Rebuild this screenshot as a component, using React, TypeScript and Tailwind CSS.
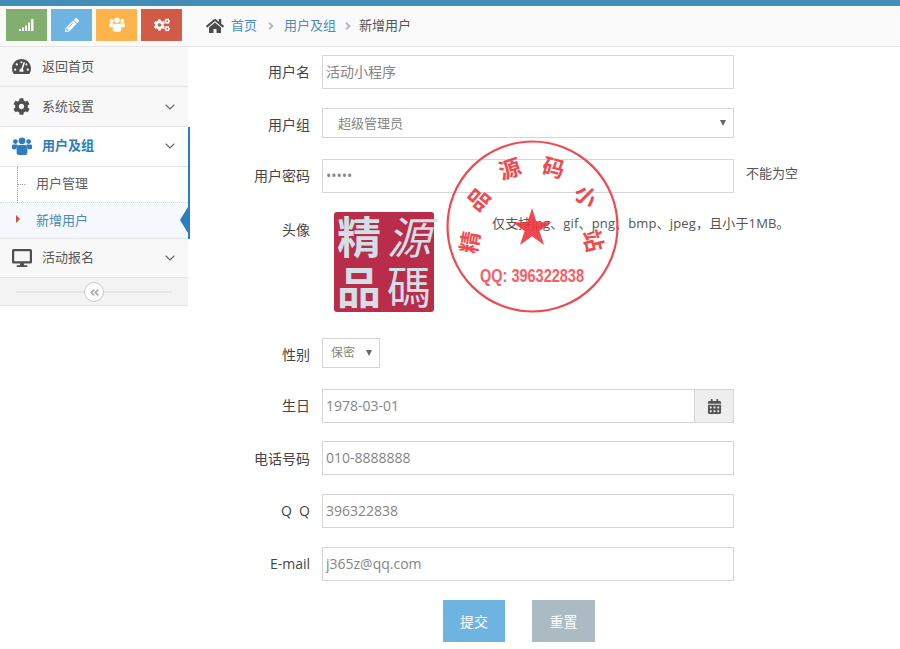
import type { ReactNode } from 'react';
import {
  FaPencilAlt,
  FaCogs,
  FaHome,
  FaTachometerAlt,
  FaCog,
  FaDesktop,
  FaCalendarAlt,
  FaAngleDoubleLeft,
  FaAngleRight,
} from 'react-icons/fa';
import { ChevronDown } from 'lucide-react';

const fontStack = "font-['Open_Sans','Noto_Sans_CJK_SC',sans-serif]";

// three person glyph, closer to the old font-awesome one than the FA5 icon
const UsersIcon = ({ className = '' }: { className?: string }) => (
  <svg className={className} viewBox="0 0 20 18" fill="currentColor">
    <circle cx="3.4" cy="4.6" r="2.4" />
    <circle cx="16.6" cy="4.6" r="2.4" />
    <circle cx="10" cy="3.8" r="3.4" />
    <path d="M0 8.6C0 7.8.7 7.4 1.6 7.4h3.2c.5 0 1 .2 1.3.6-1 1-1.7 2.600-1.700 4.300H1.600C.6 12.300 0 11.700 0 10.900Z" />
    <path d="M20 8.600c0-.8-.7-1.200-1.600-1.200h-3.200c-.5 0-1 .2-1.300.6 1 1 1.700 2.600 1.700 4.300h2.800c1 0 1.600-.6 1.600-1.400Z" />
    <path d="M7.400 8h5.200c1.700 0 2.800 1.600 2.800 4v3.400c0 1.400-1 2.600-2.400 2.600H7c-1.400 0-2.400-1.200-2.400-2.600V12c0-2.400 1.100-4 2.800-4Z" />
  </svg>
);

const SignalIcon = () => (
  <svg width="15" height="12" viewBox="0 0 15 12" fill="currentColor">
    <rect x="0" y="10" width="2" height="2" />
    <rect x="3" y="8.500" width="2" height="3.500" />
    <rect x="6" y="6.500" width="2" height="5.500" />
    <rect x="9" y="3.500" width="2" height="8.500" />
    <rect x="12" y="0" width="2.500" height="12" />
  </svg>
);

const NavRow = ({ icon, label, arrow = false, active = false, className = '' }: { icon: ReactNode; label: string; arrow?: boolean; active?: boolean; className?: string }) => (
  <div className={`flex items-center border-b border-[#e5e5e5] ${active ? 'bg-white text-[#2b7dbc] font-bold' : 'bg-[#f8f8f8] text-[#585858]'} ${className}`}>
    <div className="flex w-[42px] justify-center pl-[1px] text-[#4f4f4f]">{icon}</div>
    <span className="flex-1 text-[13px]">{label}</span>
    {arrow && <ChevronDown size={16} strokeWidth={1.6} className="mr-[10px] text-[#666]" />}
  </div>
);

const Field = ({ label, children, className = '', labelClass = 'pb-[2px]' }: { label: string; children: ReactNode; className?: string; labelClass?: string }) => (
  <div className={`flex items-center ${className}`}>
    <label className={`w-[122px] text-right text-[14px] text-[#444] ${labelClass}`}>{label}</label>
    <div className="ml-[12px] flex items-center">{children}</div>
  </div>
);

const TextInput = ({ value, type = 'text' }: { value: string; type?: string }) => (
  <input
    type={type}
    defaultValue={value}
    readOnly
    className="h-[34px] w-[412px] border border-[#d5d5d5] bg-white px-[3px] pb-[2px] text-[14px] text-[#858585] outline-none"
  />
);

const SelectBox = ({ value, className }: { value: string; className: string }) => (
  <div className="relative">
    <select className={`h-[30px] appearance-none border border-[#d5d5d5] bg-white outline-none text-[#858585] ${className}`}>
      <option>{value}</option>
    </select>
    <span className="absolute right-[8px] top-[12px] h-0 w-0 border-x-[3px] border-t-[6px] border-x-transparent border-t-[#666]" />
  </div>
);

const Stamp = () => (
  <svg className="absolute left-[446px] top-[139px]" width="174" height="176" viewBox="0 0 174 176">
    <circle cx="86.500" cy="87.500" r="85" fill="none" stroke="#ee4a50" strokeWidth="2.200" />
    <polygon
      points="86,69 90.600,83.200 105.500,83.200 93.400,91.900 98,106 86,97.300 74,106 78.600,91.900 66.500,83.200 81.400,83.200"
      fill="#f0333d"
      fillOpacity="0.9"
    />
    <g fill="#ee4a50" fontSize="22" fontWeight="700" textAnchor="middle" dominantBaseline="central" fontFamily="'Noto Sans CJK SC',sans-serif">
      <text transform="translate(22 103) rotate(-80)">精</text>
      <text transform="translate(31 59) rotate(-50)">品</text>
      <text transform="translate(63 28) rotate(-18)">源</text>
      <text transform="translate(108 27) rotate(15)">码</text>
      <text transform="translate(141 56) rotate(45)">小</text>
      <text transform="translate(149 101) rotate(75)">站</text>
    </g>
    <text x="86" y="143" fill="#f0616a" fontSize="18" fontWeight="700" textAnchor="middle" fontFamily="'Liberation Sans',sans-serif" textLength="104" lengthAdjust="spacingAndGlyphs">
      QQ: 396322838
    </text>
  </svg>
);

const Logo = () => (
  <div className="grid h-[100px] w-[100px] grid-cols-[50px_50px] grid-rows-[50px_50px] rounded-[3px] bg-[#b92d4b] font-['Noto_Sans_CJK_TC',serif] text-[44px] leading-[44px] text-[#d3dee5]">
    <span className="h-[50px] w-[50px] pl-[3px] pt-[1px] font-bold">精</span>
    <span className="h-[50px] w-[50px] pl-[3px] pt-[1px] italic">源</span>
    <span className="h-[50px] w-[50px] pl-[3px] pt-[1px] font-bold">品</span>
    <span className="h-[50px] w-[50px] pl-[3px] pt-[1px]">碼</span>
  </div>
);

export default function App() {
  return (
    <div className={`relative h-[649px] w-[900px] overflow-hidden bg-white ${fontStack}`}>
      <div className="h-[6px] bg-[#438eb9]" />
      <div className="flex">
        <aside className="w-[188px] shrink-0">
          {/* Shortcut buttons */}
          <div className="flex h-[41px] items-center gap-[4px] border-b border-[#e5e5e5] bg-[#fafafa] pb-[3px] pl-[6px] text-white">
            <div className="flex h-[32px] w-[41px] items-center justify-center bg-[#82af6f]"><SignalIcon /></div>
            <div className="flex h-[32px] w-[41px] items-center justify-center bg-[#6fb3e0]"><FaPencilAlt className="text-[14px]" /></div>
            <div className="flex h-[32px] w-[41px] items-center justify-center bg-[#ffb44b]"><UsersIcon className="h-[15px] w-[16px]" /></div>
            <div className="flex h-[32px] w-[41px] items-center justify-center bg-[#d15b47]"><FaCogs className="text-[16px]" /></div>
          </div>

          <NavRow className="h-[40px]" icon={<FaTachometerAlt className="text-[19px]" />} label="返回首页" />
          <NavRow className="h-[40px]" icon={<FaCog className="text-[17px]" />} label="系统设置" arrow />
          <div className="relative">
            <div className="absolute right-[-2px] top-0 z-10 h-[112px] w-[2px] bg-[#2b7dbc]" />
            <NavRow
              className="h-[40px] pb-[2px]"
              active
              icon={<UsersIcon className="h-[18px] w-[20px] text-[#2b7dbc]" />}
              label="用户及组"
              arrow
            />
            <div className="relative">
              <div className="absolute bottom-0 left-[17px] top-0 border-l border-dotted border-[#9a9a9a]" />
              <div className="flex h-[36px] items-center border-b border-dotted border-[#d8d8d8] bg-white pb-[2px] pl-[36px] text-[13px] text-[#616161]">
                <span className="absolute left-[18px] top-[17px] w-[7px] border-t border-dotted border-[#9a9a9a]" />
                用户管理
              </div>
              <div className="relative flex h-[36px] items-center border-b border-[#e5e5e5] bg-[#f5f8fc] pl-[36px] text-[13px] text-[#4b88b7]">
                <span className="absolute left-[16px] top-[12px] h-0 w-0 border-y-[4px] border-l-[4px] border-y-transparent border-l-[#c8553d]" />
                新增用户
                <span className="absolute right-0 top-[4px] h-0 w-0 border-y-[13px] border-r-[8px] border-y-transparent border-r-[#2b7dbc]" />
              </div>
            </div>
          </div>
          <NavRow className="h-[39px]" icon={<FaDesktop className="text-[20px]" />} label="活动报名" arrow />
          <div className="relative flex h-[28px] items-center justify-center border-b border-[#e5e5e5] bg-[#f3f3f3]">
            <div className="mx-[16px] h-[2px] w-full bg-[#e6e6e6]" />
            <div className="absolute left-[84px] top-[4px] flex h-[20px] w-[20px] items-center justify-center rounded-full border border-[#c8c8c8] bg-white text-[#aaa]">
              <FaAngleDoubleLeft className="text-[11px]" />
            </div>
          </div>
        </aside>

        <main className="min-w-0 flex-1">
          {/* Breadcrumbs */}
          <div className="flex h-[41px] items-center border-b border-[#e5e5e5] bg-[#fafafa] pl-[18px] text-[13px]">
            <FaHome className="text-[18px] text-[#4c4c4c]" />
            <span className="ml-[7px] text-[#4c8fbd]">首页</span>
            <FaAngleRight className="mx-[7.500px] text-[12px] text-[#b2b6bf]" />
            <span className="text-[#4c8fbd]">用户及组</span>
            <FaAngleRight className="mx-[5.500px] text-[12px] text-[#b2b6bf]" />
            <span className="text-[#555]">新增用户</span>
          </div>

          <form className="pt-[8px]">
            <Field label="用户名">
              <TextInput value="活动小程序" />
            </Field>
            <Field label="用户组" className="mt-[19px]" labelClass="pt-[2px]">
              <SelectBox value="超级管理员" className="w-[412px] pl-[15px] pt-[2px] text-[13px]" />
            </Field>
            <Field label="用户密码" className="mt-[21px]">
              <TextInput value="12345" type="password" />
              <span className="ml-[12px] -mt-[4px] text-[13px] text-[#555]">不能为空</span>
            </Field>
            <div className="mt-[19px] flex">
              <label className="w-[122px] pt-[7px] text-right text-[14px] text-[#444]">头像</label>
              <div className="ml-[24px]"><Logo /></div>
              <p className="ml-[58px] pt-[2px] text-[13px] tracking-[0.15px] text-[#555]">仅支持jpg、gif、png、bmp、jpeg，且小于1MB。</p>
            </div>
            <Field label="性别" className="mt-[26px]" labelClass="pt-[2px]">
              <SelectBox value="保密" className="w-[58px] pl-[8px] text-[12px]" />
            </Field>
            <Field label="生日" className="mt-[21px]">
              <div className="flex h-[34px] w-[412px]">
                <input defaultValue="1978-03-01" readOnly className="h-full min-w-0 flex-1 border border-r-0 border-[#d5d5d5] bg-white px-[3px] pb-[1px] text-[14px] text-[#858585] outline-none" />
                <div className="flex w-[40px] items-center justify-center border border-[#d5d5d5] bg-[#eeeeee] text-[#555]">
                  <FaCalendarAlt className="text-[15px]" />
                </div>
              </div>
            </Field>
            <Field label="电话号码" className="mt-[18px]" labelClass="">
              <TextInput value="010-8888888" />
            </Field>
            <Field label={'Q\u00a0\u00a0Q'} className="mt-[19px]">
              <TextInput value="396322838" />
            </Field>
            <Field label="E-mail" className="mt-[19px]">
              <TextInput value="j365z@qq.com" />
            </Field>
            <div className="mt-[19px] flex pl-[255px] text-[14px] text-white">
              <button type="button" className="h-[42px] w-[62px] bg-[#6fb3e0]">提交</button>
              <button type="button" className="ml-[27px] h-[42px] w-[63px] bg-[#abbac3]">重置</button>
            </div>
          </form>
        </main>
      </div>
      <Stamp />
    </div>
  );
}
